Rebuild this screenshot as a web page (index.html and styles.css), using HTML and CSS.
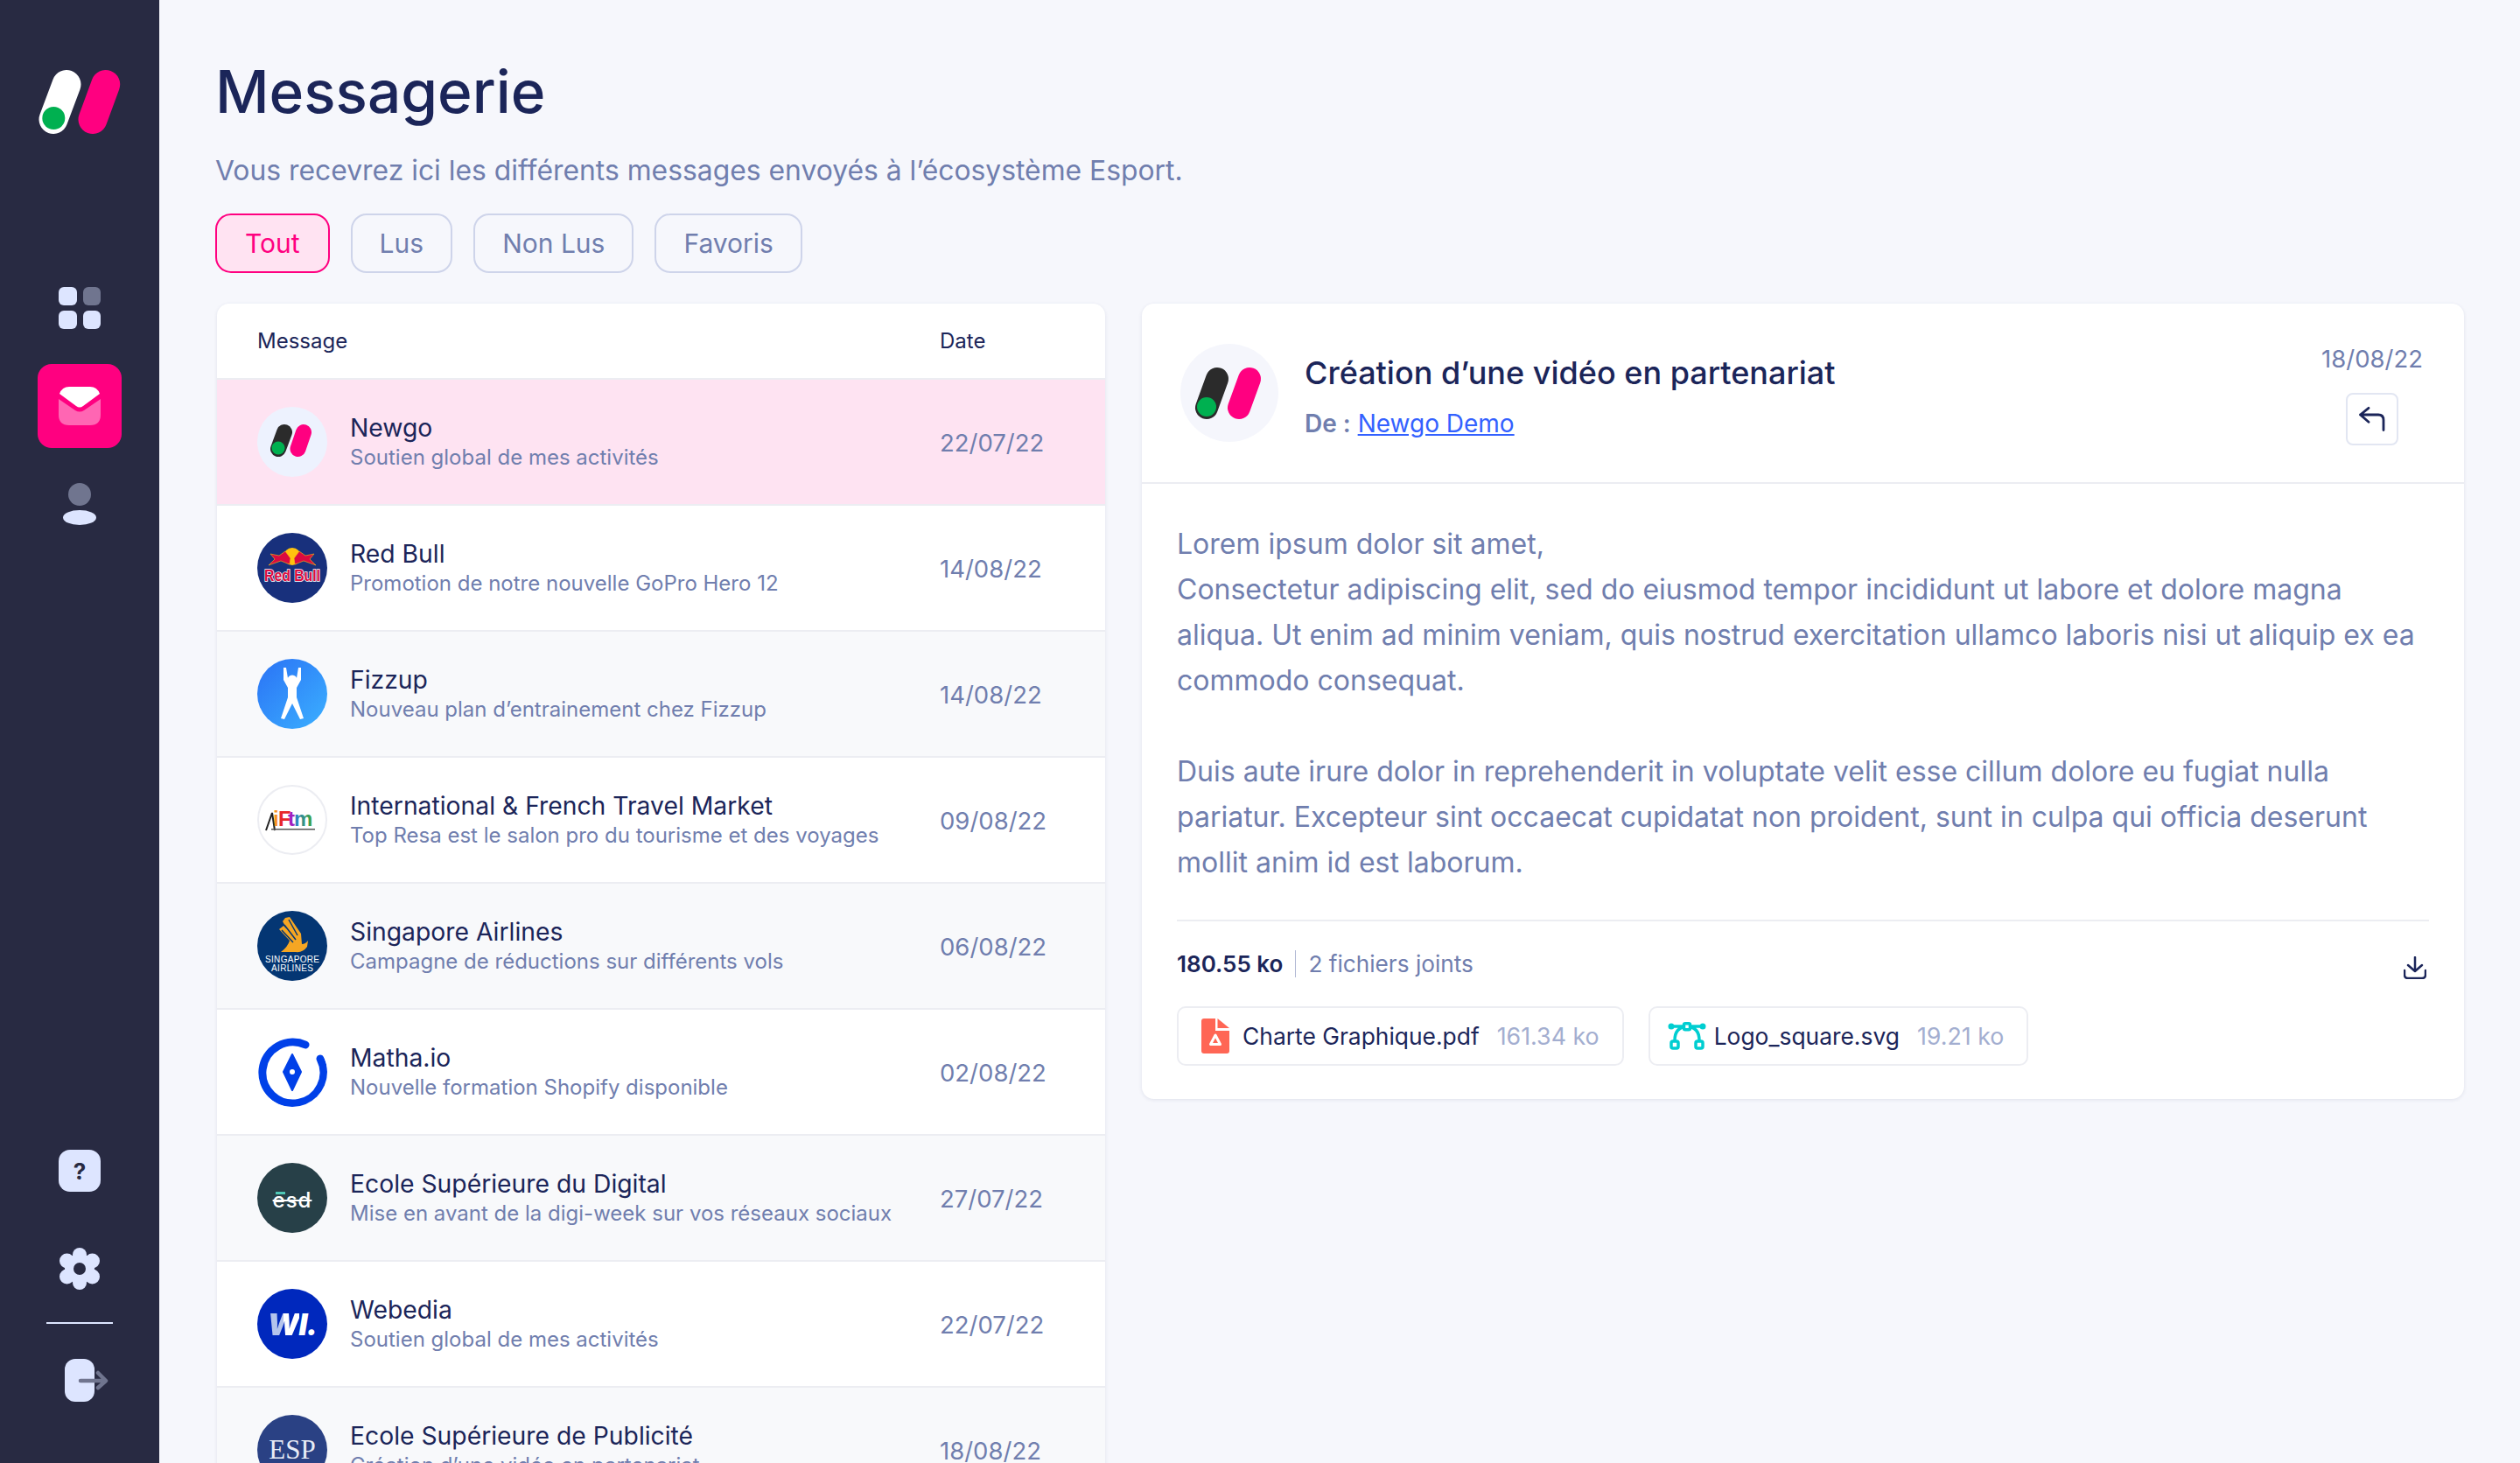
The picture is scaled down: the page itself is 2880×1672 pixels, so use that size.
FILE: index.html
```html
<!DOCTYPE html>
<html lang="fr">
<head>
    <meta charset="UTF-8">
    <meta name="viewport" content="width=device-width, initial-scale=1.0">
    <title>Messagerie</title>
    <link rel="stylesheet" href="styles.css">
</head>
<body>
    <aside class="sidebar">
        <svg class="logo" width="94" height="73" viewBox="0 0 94 73">
            <path d="M32 16.500 L17 56.500" stroke="#fff" stroke-width="33" stroke-linecap="round"/>
            <circle cx="17.300" cy="55" r="13" fill="#00b050"/>
            <path d="M76.700 16.500 L62 56.500" stroke="#ff0080" stroke-width="33" stroke-linecap="round"/>
        </svg>
        <nav class="nav-top">
            <a class="nav-item">
                <svg width="48" height="48" viewBox="0 0 48 48">
                    <rect x="0" y="0" width="21" height="21" rx="6" fill="#dde5ff"/>
                    <rect x="28" y="0" width="20" height="21" rx="6" fill="#70758f"/>
                    <rect x="0" y="27" width="21" height="21" rx="6" fill="#dde5ff"/>
                    <rect x="28" y="27" width="20" height="21" rx="6" fill="#dde5ff"/>
                </svg>
            </a>
            <a class="nav-item active">
                <svg width="48" height="44" viewBox="0 0 48 44">
                    <path d="M0 14 L19 27 Q24 30 29 27 L48 14 V32 Q48 44 36 44 H12 Q0 44 0 32 Z" fill="#ff66b3"/>
                    <path d="M1 8 Q4 0 12 0 H36 Q44 0 47 8 L28 22 Q24 25 20 22 Z" fill="#fff"/>
                </svg>
            </a>
            <a class="nav-item">
                <svg width="38" height="48" viewBox="0 0 38 48">
                    <circle cx="19" cy="13" r="13" fill="#70758f"/>
                    <ellipse cx="19" cy="39.500" rx="19" ry="8.500" fill="#dde5ff"/>
                </svg>
            </a>
        </nav>
        <nav class="nav-bottom">
            <span class="help">?</span>
            <svg class="gear" width="46" height="48" viewBox="0 0 46 48">
                <g fill="#dde5ff">
                    <circle cx="23" cy="24" r="17"/>
                    <circle cx="23" cy="8" r="8"/>
                    <circle cx="23" cy="40" r="8"/>
                    <circle cx="37.500" cy="15" r="8.500"/>
                    <circle cx="37.500" cy="33" r="8.500"/>
                    <circle cx="8.500" cy="15" r="8.500"/>
                    <circle cx="8.500" cy="33" r="8.500"/>
                </g>
                <circle cx="23" cy="24" r="7" fill="#282a42"/>
            </svg>
            <div class="nav-line"></div>
            <svg class="logout" width="50" height="49" viewBox="0 0 50 49">
                <rect x="0" y="0" width="34" height="49" rx="12" fill="#dde5ff"/>
                <path d="M18 25 H46 M38 16 L47 25 L38 33" fill="none" stroke="#70758f" stroke-width="4.500" stroke-linecap="round" stroke-linejoin="round"/>
            </svg>
        </nav>
    </aside>

    <main class="main">
        <h1>Messagerie</h1>
        <p class="subtitle">Vous recevrez ici les différents messages envoyés à l’écosystème Esport.</p>
        <div class="tabs">
            <button class="tab active">Tout</button>
            <button class="tab">Lus</button>
            <button class="tab">Non Lus</button>
            <button class="tab">Favoris</button>
        </div>

        <div class="columns">
            <section class="card list">
                <div class="list-head"><span>Message</span><span class="col-date">Date</span></div>

                <div class="row selected">
                    <div class="avatar av-newgo">
                        <svg width="80" height="80" viewBox="0 0 80 80">
                            <path d="M31 29 L24 48" stroke="#2b2b2b" stroke-width="18" stroke-linecap="round"/>
                            <circle cx="24" cy="47" r="7.500" fill="#00b050"/>
                            <path d="M53 29 L46.500 48" stroke="#ff0080" stroke-width="18" stroke-linecap="round"/>
                        </svg>
                    </div>
                    <div class="row-text"><div class="row-name">Newgo</div><div class="row-desc">Soutien global de mes activités</div></div>
                    <div class="row-date">22/07/22</div>
                </div>

                <div class="row">
                    <div class="avatar av-redbull">
                        <svg width="80" height="80" viewBox="0 0 80 80">
                            <circle cx="40" cy="27" r="10" fill="#ffc20e"/>
                            <path d="M37 36 L27 32 L13 37 L20 30 L15 24 L25 26 L32 21 L38 29Z M43 36 L53 32 L67 37 L60 30 L65 24 L55 26 L48 21 L42 29Z" fill="#db0a40" stroke="#ffc20e" stroke-width=".6"/>
                            <text x="8" y="55" class="rb-text" textLength="64" lengthAdjust="spacingAndGlyphs">Red Bull</text>
                        </svg>
                    </div>
                    <div class="row-text"><div class="row-name">Red Bull</div><div class="row-desc">Promotion de notre nouvelle GoPro Hero 12</div></div>
                    <div class="row-date">14/08/22</div>
                </div>

                <div class="row">
                    <div class="avatar av-fizzup">
                        <svg width="80" height="80" viewBox="0 0 80 80">
                            <circle cx="40" cy="24" r="5.500" fill="#fff"/>
                            <path d="M30 10 L33 10 L35 22 L38 27 H42 L45 22 L47 10 L50 10 L50 24 L45 33 L45 44 L53 68 L49 69 L40 51 L31 69 L27 68 L35 44 L35 33 L30 24Z" fill="#fff"/>
                        </svg>
                    </div>
                    <div class="row-text"><div class="row-name">Fizzup</div><div class="row-desc">Nouveau plan d’entrainement chez Fizzup</div></div>
                    <div class="row-date">14/08/22</div>
                </div>

                <div class="row">
                    <div class="avatar av-iftm">
                        <svg width="76" height="76" viewBox="0 0 76 76">
                            <defs>
                                <linearGradient id="iftmGrad" x1="0" x2="1" y1="0" y2="0">
                                    <stop offset="0" stop-color="#2b7fd4"/>
                                    <stop offset="1" stop-color="#3fa535"/>
                                </linearGradient>
                            </defs>
                            <path d="M8 50 L15 30 L18 50" fill="none" stroke="#222" stroke-width="2"/>
                            <text x="16" y="45" class="iftm-text" fill="#f7941d">i</text>
                            <text x="22" y="45" class="iftm-text" fill="#e8262a">F</text>
                            <text x="33" y="45" class="iftm-text" fill="#a020c0">t</text>
                            <text x="40" y="45" class="iftm-text" fill="url(#iftmGrad)">m</text>
                            <rect x="14" y="48" width="50" height="1.500" fill="#555"/>
                        </svg>
                    </div>
                    <div class="row-text"><div class="row-name">International &amp; French Travel Market</div><div class="row-desc">Top Resa est le salon pro du tourisme et des voyages</div></div>
                    <div class="row-date">09/08/22</div>
                </div>

                <div class="row">
                    <div class="avatar av-singapore">
                        <svg width="80" height="80" viewBox="0 0 80 80">
                            <path d="M32 8 L37 7 L50 26 L51 38 Q55 38 58 34 L57 41 Q52 48 44 47 L27 47 Q35 41 37 34 L25 21 L30 17 L34 21 L29 12Z" fill="#f5a623"/>
                            <path d="M36 10 L46 28 M31 16 L44 33 M28 22 L41 36" stroke="#043673" stroke-width="1.500" fill="none"/>
                            <text x="9" y="59" class="sq-text" textLength="62">SINGAPORE</text>
                            <text x="16" y="69" class="sq-text" textLength="48">AIRLINES</text>
                        </svg>
                    </div>
                    <div class="row-text"><div class="row-name">Singapore Airlines</div><div class="row-desc">Campagne de réductions sur différents vols</div></div>
                    <div class="row-date">06/08/22</div>
                </div>

                <div class="row">
                    <div class="avatar av-matha">
                        <svg width="80" height="80" viewBox="0 0 80 80">
                            <path d="M55 9 A35 35 0 1 0 72 25" fill="none" stroke="#0040e8" stroke-width="9" stroke-linecap="round"/>
                            <path fill="#0040e8" fill-rule="evenodd" d="M40 20 L50 40 L40 61 L30 40Z M40 36 a4 4 0 1 0 0 8 a4 4 0 0 0 0 -8Z" stroke="#0040e8" stroke-width="2" stroke-linejoin="round"/>
                        </svg>
                    </div>
                    <div class="row-text"><div class="row-name">Matha.io</div><div class="row-desc">Nouvelle formation Shopify disponible</div></div>
                    <div class="row-date">02/08/22</div>
                </div>

                <div class="row">
                    <div class="avatar av-esd">
                        <span class="esd-bar"></span><span class="esd-text">esd</span>
                    </div>
                    <div class="row-text"><div class="row-name">Ecole Supérieure du Digital</div><div class="row-desc">Mise en avant de la digi-week sur vos réseaux sociaux</div></div>
                    <div class="row-date">27/07/22</div>
                </div>

                <div class="row">
                    <div class="avatar av-webedia"><span class="wi-text"><span class="wi-w">W</span>I.</span></div>
                    <div class="row-text"><div class="row-name">Webedia</div><div class="row-desc">Soutien global de mes activités</div></div>
                    <div class="row-date">22/07/22</div>
                </div>

                <div class="row">
                    <div class="avatar av-esp">ESP</div>
                    <div class="row-text"><div class="row-name">Ecole Supérieure de Publicité</div><div class="row-desc">Création d’une vidéo en partenariat</div></div>
                    <div class="row-date">18/08/22</div>
                </div>
            </section>

            <section class="card detail">
                <header class="detail-head">
                    <div class="detail-avatar">
                        <svg width="112" height="112" viewBox="0 0 112 112">
                            <path d="M42 40 L30 73" stroke="#2b2b2b" stroke-width="26" stroke-linecap="round"/>
                            <circle cx="30" cy="72" r="11" fill="#00b050"/>
                            <path d="M79 40 L67 73" stroke="#ff0080" stroke-width="26" stroke-linecap="round"/>
                        </svg>
                    </div>
                    <div class="detail-title">
                        <h2>Création d’une vidéo en partenariat</h2>
                        <div class="from"><b>De :</b> <a class="from-link">Newgo Demo</a></div>
                    </div>
                    <div class="detail-meta">
                        <div class="detail-date">18/08/22</div>
                        <button class="reply">
                            <svg width="30" height="30" viewBox="0 0 30 30"><path d="M11 2.300 L1.500 10 L11 18.300 M1.500 10 H22 Q28 10 28 16 V27.500" fill="none" stroke="#1b2559" stroke-width="2.800" stroke-linecap="round" stroke-linejoin="round"/></svg>
                        </button>
                    </div>
                </header>

                <div class="detail-body">
                    <p class="body-text">Lorem ipsum dolor sit amet,<br>Consectetur adipiscing elit, sed do eiusmod tempor incididunt ut labore et dolore magna aliqua. Ut enim ad minim veniam, quis nostrud exercitation ullamco laboris nisi ut aliquip ex ea commodo consequat.</p>
                    <p class="body-text">Duis aute irure dolor in reprehenderit in voluptate velit esse cillum dolore eu fugiat nulla pariatur. Excepteur sint occaecat cupidatat non proident, sunt in culpa qui officia deserunt mollit anim id est laborum.</p>

                    <div class="attach">
                        <div class="attach-head">
                            <span class="attach-size">180.55 ko</span>
                            <span class="attach-count">2 fichiers joints</span>
                            <svg class="download" width="26" height="26" viewBox="0 0 26 26"><path d="M13 1 V17 M5 10 L13 17 L21 10 M1 16 V21 Q1 25 5 25 H21 Q25 25 25 21 V16" fill="none" stroke="#1b2559" stroke-width="2.500" stroke-linecap="round" stroke-linejoin="round"/></svg>
                        </div>
                        <div class="files">
                            <div class="file">
                                <svg class="file-icon icon-pdf" width="32" height="40" viewBox="0 0 32 40">
                                    <rect width="32" height="40" rx="3" fill="#ff6655"/>
                                    <rect x="16" y="0" width="16" height="14" fill="#fff"/>
                                    <path d="M18.500 0 L32 11 H18.500Z" fill="#ff6655"/>
                                    <path d="M16 19 L10.500 29.500 H21.500Z" fill="none" stroke="#fff" stroke-width="3" stroke-linejoin="round"/>
                                </svg>
                                <span class="file-name">Charte Graphique.pdf</span>
                                <span class="file-size">161.34 ko</span>
                            </div>
                            <div class="file">
                                <svg class="file-icon" width="44" height="32" viewBox="0 0 44 32">
                                    <g fill="none" stroke="#00ced1" stroke-width="3.500" stroke-linecap="round">
                                        <path d="M4 5 H40 M8 21 Q8 6 22 5 Q36 6 36 21"/>
                                        <rect x="18.500" y="1.800" width="7" height="7" rx="1.500" fill="#fff"/>
                                        <rect x="4" y="22" width="8" height="8" rx="2" fill="#fff"/>
                                        <rect x="32" y="22" width="8" height="8" rx="2" fill="#fff"/>
                                    </g>
                                    <circle cx="4" cy="5" r="3.500" fill="#00ced1"/>
                                    <circle cx="40" cy="5" r="3.500" fill="#00ced1"/>
                                </svg>
                                <span class="file-name">Logo_square.svg</span>
                                <span class="file-size">19.21 ko</span>
                            </div>
                        </div>
                    </div>
                </div>
            </section>
        </div>
    </main>
</body>
</html>
```

FILE: styles.css
```css
:root {
    --navy: #1b2559;
    --muted: #707eae;
    --pink: #ff0080;
    --line: #ecedf2;
}

* {
    box-sizing: border-box;
}

html, body {
    height: 100%;
}

body {
    margin: 0;
    display: flex;
    height: 1672px;
    overflow: hidden;
    background: #f6f7fc;
    color: var(--navy);
    font-family: Inter, "Noto Sans", sans-serif;
}

/* Sidebar */
.sidebar {
    width: 182px;
    flex: none;
    background: #282a42;
    display: flex;
    flex-direction: column;
    align-items: center;
}

.logo {
    margin-top: 80px;
    flex: none;
}

.nav-top {
    margin-top: 175px;
    display: flex;
    flex-direction: column;
}

.nav-item {
    width: 96px;
    height: 48px;
    display: flex;
    align-items: center;
    justify-content: center;
    border-radius: 16px;
}

.nav-item + .nav-item {
    margin-top: 40px;
}

.nav-item.active {
    height: 96px;
    background: var(--pink);
}

.nav-bottom {
    margin-top: auto;
    padding-bottom: 70px;
    display: flex;
    flex-direction: column;
    align-items: center;
}

.help {
    width: 48px;
    height: 48px;
    border-radius: 13px;
    background: #dde5ff;
    color: #282a42;
    font-size: 26px;
    font-weight: 700;
    display: flex;
    align-items: center;
    justify-content: center;
}

.gear {
    margin-top: 64px;
}

.nav-line {
    width: 76px;
    height: 2px;
    background: #dde5ff;
    margin-top: 37px;
}

.logout {
    margin-top: 40px;
    margin-left: 16px;
}

/* Main */
.main {
    flex: 1;
    min-width: 0;
    padding: 60px 64px 0;
}

h1 {
    margin: 0;
    font-size: 67.500px;
    line-height: 90px;
    font-weight: 500;
    color: var(--navy);
}

.subtitle {
    margin: 25px 0 0;
    font-size: 31.850px;
    line-height: 40px;
    color: var(--muted);
}

.tabs {
    display: flex;
    gap: 24px;
    margin-top: 29px;
}

.tab {
    height: 68px;
    padding: 0 31px;
    border: 2px solid #ced4ea;
    border-radius: 18px;
    background: transparent;
    color: var(--muted);
    font: 400 30px Inter, sans-serif;
}

.tab.active {
    padding: 0 32px;
    background: #ffe3f2;
    border-color: var(--pink);
    color: var(--pink);
}

.columns {
    display: flex;
    align-items: flex-start;
    gap: 42px;
    margin: 35px 0 0 2px;
}

.card {
    background: #fff;
    border-radius: 14px;
    box-shadow: 0 1px 4px rgba(27, 37, 89, 0.1);
}

/* Message list */
.list {
    width: 1015px;
    flex: none;
    overflow: hidden;
}

.list-head {
    height: 85px;
    padding-left: 46px;
    display: flex;
    align-items: center;
    font-size: 24px;
}

.col-date {
    margin-left: auto;
    width: 189px;
}

.row {
    height: 144px;
    border-top: 2px solid var(--line);
    padding-left: 46px;
    display: flex;
    align-items: center;
}

.row:nth-child(odd) {
    background: #fff;
}

.row:nth-child(even) {
    background: #f8f9fb;
}

.row.selected {
    background: #fee3f2;
}

.avatar {
    width: 80px;
    height: 80px;
    flex: none;
    border-radius: 50%;
    overflow: hidden;
    display: flex;
    align-items: center;
    justify-content: center;
    position: relative;
}

.av-newgo { background: #edf2fe; }
.av-redbull { background: #18307c; }
.av-fizzup { background: linear-gradient(135deg, #2a72f5, #3bb0ff); }
.av-iftm { background: #fff; border: 2px solid var(--line); }
.av-singapore { background: #043673; }
.av-matha { background: #fff; }
.av-esd { background: #274048; }
.av-webedia { background: #0028bd; }
.av-esp {
    background: #2a4184;
    color: #e8ecf6;
    font-family: "Liberation Serif", serif;
    font-size: 31px;
}

.rb-text {
    font-family: "Liberation Sans", sans-serif;
    font-size: 18px;
    font-weight: 700;
    fill: #db0a40;
    stroke: #fff;
    stroke-width: 1.600px;
    paint-order: stroke;
}

.iftm-text {
    font-family: "Liberation Sans", sans-serif;
    font-size: 24px;
    font-weight: 700;
}

.sq-text {
    font-family: "Liberation Sans", sans-serif;
    font-size: 10px;
    fill: #fff;
}

.esd-text {
    color: #fff;
    font-size: 24px;
    font-weight: 500;
    letter-spacing: 1px;
    text-decoration: line-through;
    text-decoration-thickness: 2px;
    margin-top: 4px;
}

.esd-bar {
    position: absolute;
    left: 21px;
    top: 33px;
    width: 11px;
    height: 3px;
    background: #4fc8b6;
}

.wi-text {
    color: #fff;
    font-size: 34px;
    font-weight: 900;
    font-style: italic;
    letter-spacing: -1px;
}

.wi-w {
    color: transparent;
    background: linear-gradient(90deg, #b4c4ec 50%, #fff 50%);
    -webkit-background-clip: text;
    background-clip: text;
}

.row-text {
    margin-left: 26px;
    flex: 1;
    min-width: 0;
}

.row-name {
    font-size: 28.300px;
    line-height: 36px;
    color: var(--navy);
}

.row-desc {
    font-size: 24px;
    line-height: 32px;
    color: var(--muted);
}

.row-date {
    width: 189px;
    flex: none;
    padding-top: 2px;
    font-size: 27.500px;
    color: var(--muted);
}

/* Detail card */
.detail {
    flex: 1;
    min-width: 0;
}

.detail-head {
    height: 206px;
    padding: 0 47px 0 44px;
    border-bottom: 2px solid var(--line);
    display: flex;
    align-items: center;
}

.detail-avatar {
    width: 112px;
    height: 112px;
    flex: none;
    border-radius: 50%;
    background: #f5f6fc;
    display: flex;
    align-items: center;
    justify-content: center;
}

.detail-title {
    margin: 7px 0 0 30px;
    flex: 1;
}

h2 {
    margin: 0;
    font-size: 36px;
    line-height: 46px;
    font-weight: 500;
    color: var(--navy);
}

.from {
    margin-top: 16px;
    font-size: 28px;
    line-height: 38px;
    color: var(--muted);
}

.from b {
    font-weight: 600;
}

.from-link {
    color: #3361ff;
    text-decoration: underline;
}

.detail-meta {
    display: flex;
    flex-direction: column;
    align-items: center;
    margin-top: 1px;
}

.detail-date {
    font-size: 27.500px;
    line-height: 38px;
    color: var(--muted);
}

.reply {
    width: 60px;
    height: 60px;
    margin-top: 20px;
    padding: 0;
    background: #fff;
    border: 2px solid #e2e6f2;
    border-radius: 8px;
    display: flex;
    align-items: center;
    justify-content: center;
}

.detail-body {
    padding: 43px 40px 38px;
}

.body-text {
    margin: 0 0 52px;
    font-size: 32px;
    line-height: 52px;
    color: var(--muted);
}

.body-text + .body-text {
    margin-bottom: 39px;
}

.attach {
    border-top: 2px solid var(--line);
}

.attach-head {
    display: flex;
    align-items: center;
    height: 96px;
}

.attach-size {
    font-size: 26px;
    font-weight: 600;
    color: var(--navy);
    padding-right: 14px;
    border-right: 1px solid #b0b8d4;
}

.attach-count {
    font-size: 26.200px;
    color: var(--muted);
    padding-left: 14px;
}

.download {
    margin-left: auto;
    margin-top: 10px;
    margin-right: 3px;
}

.files {
    display: flex;
    gap: 28px;
    margin-top: 1px;
}

.file {
    height: 68px;
    padding: 0 26px 0 20px;
    display: flex;
    align-items: center;
    border: 2px solid var(--line);
    border-radius: 10px;
}

.file-icon {
    margin-right: 9px;
}

.icon-pdf {
    margin: 0 15px 0 6px;
}

.file-name {
    font-size: 26.400px;
    color: var(--navy);
}

.file-size {
    font-size: 26.800px;
    color: #a3aed0;
    margin-left: 20px;
}
```
